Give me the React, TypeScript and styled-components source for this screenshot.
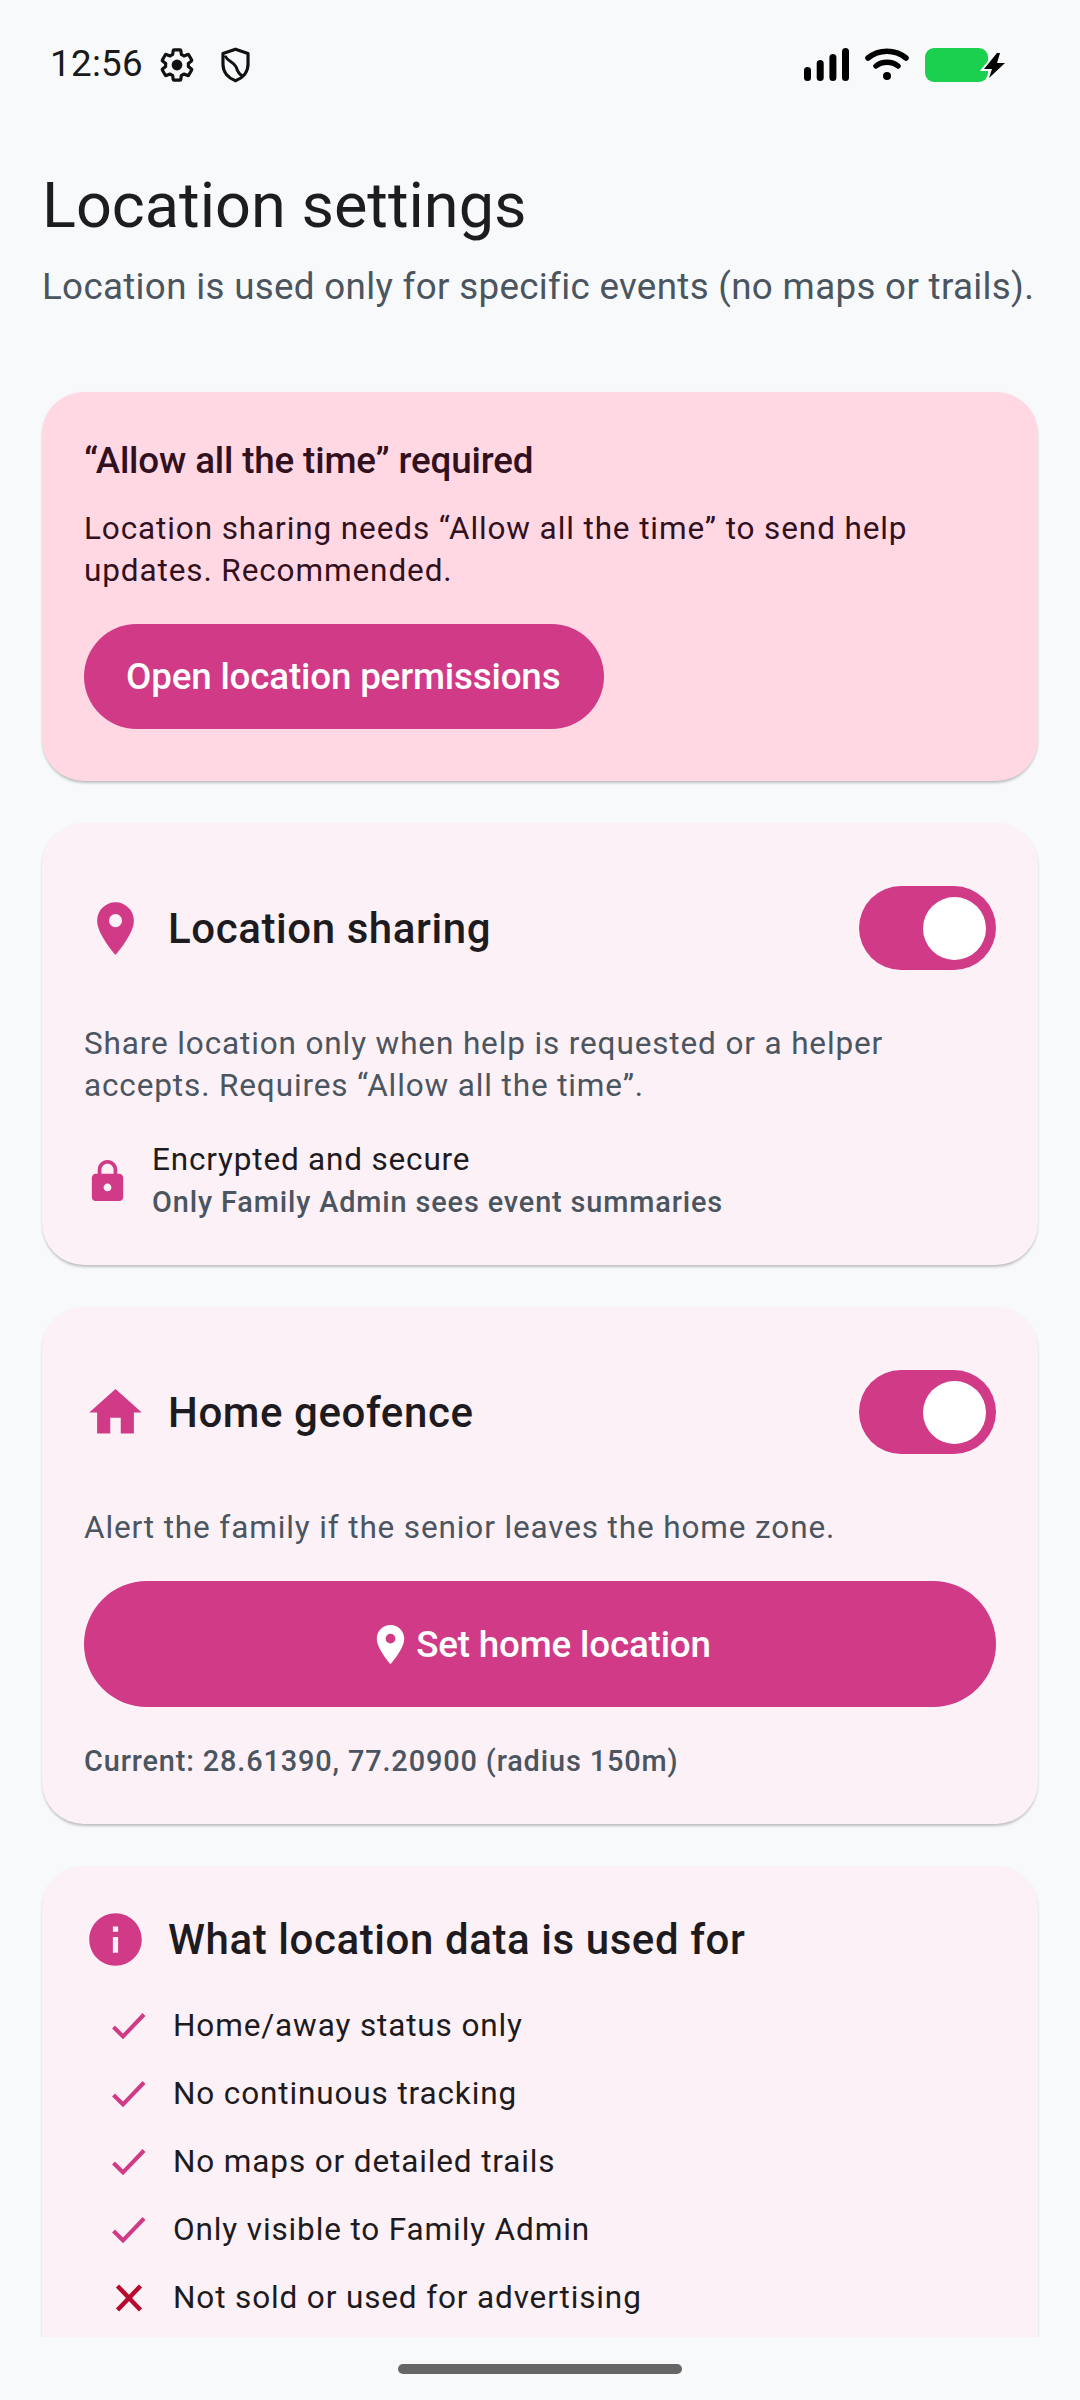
import React from "react";
import styled, { createGlobalStyle } from "styled-components";

const PRIMARY = "#D03A86";

const Global = createGlobalStyle`
  html, body { margin: 0; padding: 0; background: #F8F9FB; }
  body { font-family: Roboto, "Noto Sans", sans-serif; -webkit-font-smoothing: antialiased; }
`;

const Screen = styled.div`
  width: 1080px;
  height: 2400px;
  display: flex;
  flex-direction: column;
  background: #f8f9fb;
  overflow: hidden;
`;

const StatusBar = styled.div`
  height: 126px;
  flex: none;
  display: flex;
  align-items: center;
  justify-content: space-between;
  padding: 3px 74px 0 50px;
  box-sizing: border-box;
`;

const StatusGroup = styled.div`
  display: flex;
  align-items: center;
`;

const Clock = styled.span`
  font-size: 36.75px;
  letter-spacing: 0.3px;
  color: #1a1a1a;
  margin-right: 15px;
  line-height: 42px;
  position: relative;
  top: -1px;
`;

const Scroller = styled.main`
  height: 2211px;
  flex: none;
  overflow: hidden;
  padding: 0 42px;
  box-sizing: border-box;
  display: flex;
  flex-direction: column;
`;

const Title = styled.h1`
  margin: 38px 0 18px;
  font-size: 63px;
  line-height: 84px;
  font-weight: 400;
  color: #1d1d1f;
`;

const Subtitle = styled.p`
  margin: 0 0 84px;
  font-size: 36.75px;
  line-height: 42px;
  letter-spacing: 0.32px;
  color: #4b5560;
  white-space: nowrap;
`;

const Card = styled.section<{ $tone?: "alert" | "plain" }>`
  flex: none;
  background: ${(p) => (p.$tone === "alert" ? "#FFD8E4" : "#FCF1F7")};
  border-radius: 42px;
  padding: 42px;
  margin-bottom: 42px;
  box-shadow: 0 3px 3px -1px rgba(0, 0, 0, 0.2), 0 1px 3px rgba(0, 0, 0, 0.08);
  display: flex;
  flex-direction: column;
  align-items: stretch;
`;

const AlertTitle = styled.h2`
  margin: 0 0 20px;
  font-size: 36.75px;
  line-height: 54px;
  font-weight: 500;
  letter-spacing: -0.15px;
  color: #31111d;
`;

const AlertBody = styled.p`
  margin: 0 0 32px;
  font-size: 31.5px;
  line-height: 42px;
  letter-spacing: 0.89px;
  color: #31111d;
`;

const FillButton = styled.button<{ $wide?: boolean }>`
  border: 0;
  background: ${PRIMARY};
  color: #fff;
  border-radius: 999px;
  font-family: inherit;
  font-size: 36.75px;
  font-weight: 500;
  letter-spacing: -0.17px;
  display: flex;
  align-items: center;
  justify-content: center;
  gap: 2px;
  padding: 0 44px 0 42px;
  height: ${(p) => (p.$wide ? "126px" : "105px")};
  width: ${(p) => (p.$wide ? "100%" : "fit-content")};
  margin-bottom: ${(p) => (p.$wide ? "33px" : "10px")};
`;

const CardHeader = styled.div<{ $tall?: boolean }>`
  display: flex;
  align-items: center;
  justify-content: space-between;
  height: ${(p) => (p.$tall ? "126px" : "63px")};
  margin-bottom: ${(p) => (p.$tall ? "32px" : "34px")};
`;

const HeaderLead = styled.div`
  display: flex;
  align-items: center;
  gap: 21px;
`;

const CardTitle = styled.h2`
  margin: 0;
  font-size: 42px;
  line-height: 63px;
  font-weight: 500;
  letter-spacing: 0.58px;
  color: #1d1b20;
`;

const Toggle = styled.div`
  width: 137px;
  height: 84px;
  border-radius: 42px;
  background: ${PRIMARY};
  display: flex;
  align-items: center;
  justify-content: flex-end;
  padding-right: 10px;
  box-sizing: border-box;
`;

const Thumb = styled.div`
  width: 63px;
  height: 63px;
  border-radius: 50%;
  background: #fff;
`;

const Description = styled.p`
  margin: 0 0 32px;
  font-size: 31.5px;
  line-height: 42px;
  letter-spacing: 0.87px;
  color: #4b5560;
`;

const SecureRow = styled.div`
  display: flex;
  align-items: center;
  gap: 21px;
`;

const SecureText = styled.div`
  display: flex;
  flex-direction: column;
`;

const SecureHead = styled.span`
  font-size: 31.5px;
  line-height: 42px;
  letter-spacing: 0.82px;
  color: #1d1b20;
`;

const Caption = styled.span`
  font-size: 28.875px;
  line-height: 42px;
  font-weight: 500;
  letter-spacing: 0.87px;
  color: #4b5560;
`;

const FactList = styled.ul`
  list-style: none;
  margin: 0;
  padding: 0 0 60px 21px;
  display: flex;
  flex-direction: column;
  gap: 26px;
`;

const Fact = styled.li`
  display: flex;
  align-items: center;
  gap: 20px;
  font-size: 31.5px;
  line-height: 42px;
  letter-spacing: 0.87px;
  color: #1d1b20;
`;

const FactMark = styled.span`
  width: 48px;
  height: 42px;
  flex: none;
  display: flex;
  align-items: center;
  justify-content: center;
`;

const NavArea = styled.div`
  flex: 1;
  display: flex;
  justify-content: center;
  padding-top: 27px;
`;

const HomeBar = styled.div`
  width: 284px;
  height: 10px;
  border-radius: 5px;
  background: #666;
`;

const Glyph = ({ size, d, fill = PRIMARY }: { size: number; d: string; fill?: string }) => (
  <svg width={size} height={size} viewBox="0 0 24 24" fill={fill} style={{ flex: "none" }}>
    <path fillRule="evenodd" d={d} />
  </svg>
);

const PIN = "M12 2C8.13 2 5 5.13 5 9c0 5.25 7 13 7 13s7-7.75 7-13c0-3.87-3.13-7-7-7zm0 9.5a2.5 2.5 0 010-5 2.5 2.5 0 010 5z";
const LOCK = "M18 8h-1V6c0-2.76-2.24-5-5-5S7 3.24 7 6v2H6c-1.1 0-2 .9-2 2v10c0 1.1.9 2 2 2h12c1.1 0 2-.9 2-2V10c0-1.1-.9-2-2-2zm-6 9c-1.1 0-2-.9-2-2s.9-2 2-2 2 .9 2 2-.9 2-2 2zm3.1-9H8.9V6c0-1.71 1.39-3.1 3.1-3.1 1.71 0 3.1 1.39 3.1 3.1v2z";
const HOME = "M10 20v-6h4v6h5v-8h3L12 3 2 12h3v8z";
const INFO = "M12 2C6.48 2 2 6.48 2 12s4.48 10 10 10 10-4.48 10-10S17.52 2 12 2zm1 15h-2v-6h2v6zm0-8h-2V7h2v2z";
const COG = "M19.14 12.94c.04-.3.06-.61.06-.94 0-.32-.02-.64-.07-.94l2.03-1.58c.18-.14.23-.41.12-.61l-1.92-3.32c-.12-.22-.37-.29-.59-.22l-2.39.96c-.5-.38-1.03-.7-1.62-.94l-.36-2.54c-.04-.24-.24-.41-.48-.41h-3.84c-.24 0-.43.17-.47.41l-.36 2.54c-.59.24-1.13.57-1.62.94l-2.39-.96c-.22-.08-.47 0-.59.22L2.74 8.87c-.12.21-.08.47.12.61l2.03 1.58c-.05.3-.09.63-.09.94s.02.64.07.94l-2.03 1.58c-.18.14-.23.41-.12.61l1.92 3.32c.12.22.37.29.59.22l2.39-.96c.5.38 1.03.7 1.62.94l.36 2.54c.05.24.24.41.48.41h3.84c.24 0 .44-.17.47-.41l.36-2.54c.59-.24 1.13-.56 1.62-.94l2.39.96c.22.08.47 0 .59-.22l1.92-3.32c.12-.22.07-.47-.12-.61l-2.01-1.58z";

const Check = () => (
  <svg width="36" height="28" viewBox="0 0 36 28" fill="none">
    <path d="M2.500 15 L12 24.500 L33 2.500" stroke={PRIMARY} strokeWidth="4" />
  </svg>
);

const Cross = () => (
  <svg width="30" height="30" viewBox="0 0 30 30" fill="none">
    <path d="M3.500 3 L26.500 27 M26.500 3 L3.500 27" stroke="#B80A2E" strokeWidth="4.500" />
  </svg>
);

const Gear = () => (
  <svg width="38" height="38" viewBox="0 0 24 24" fill="none" stroke="#111" strokeWidth="2" style={{ marginRight: 25 }}>
    <path d={COG} strokeLinejoin="round" />
    <circle cx="12" cy="12" r="3.400" fill="#111" stroke="none" />
  </svg>
);

const Shield = () => (
  <svg width="29" height="36" viewBox="0 0 22 27" fill="none" stroke="#111" strokeWidth="2.400">
    <path d="M11 1.500 20.500 4.800v8.200c0 6-4 10.500-9.500 12.500C5.500 23.500 1.500 19 1.500 13V4.800z" strokeLinejoin="round" />
    <path d="M3 6.500c2 4.500 7 4.500 8.500 8.500.8 2.800 2 5.500 5 7" strokeWidth="2.200" />
  </svg>
);

const Signal = () => (
  <svg width="45" height="33" viewBox="0 0 45 33" fill="#000" style={{ marginRight: 16 }}>
    <rect x="0" y="19" width="7" height="14" rx="3.500" />
    <rect x="12.700" y="12" width="7" height="21" rx="3.500" />
    <rect x="25.400" y="6" width="7" height="27" rx="3.500" />
    <rect x="38" y="0" width="7" height="33" rx="3.500" />
  </svg>
);

const Wifi = () => (
  <svg width="44" height="33" viewBox="0 0 44 33" fill="none" stroke="#000" strokeWidth="5.500" strokeLinecap="round" style={{ marginRight: 16 }}>
    <path d="M3 10C14 1 30 1 41 10" />
    <path d="M11 18C17 13 27 13 33 18" />
    <circle cx="22" cy="28" r="4" fill="#000" stroke="none" />
  </svg>
);

const Battery = () => (
  <svg width="81" height="34" viewBox="0 0 81 34" style={{ overflow: "visible" }}>
    <rect x="0" y="0" width="63" height="34" rx="9" fill="#1BCF4F" />
    <path d="M72 5 59 21h8l-3 9 16-15h-8l3-10z" fill="#000" stroke="#F8F9FB" strokeWidth="4" paintOrder="stroke" />
  </svg>
);

const facts = [
  "Home/away status only",
  "No continuous tracking",
  "No maps or detailed trails",
  "Only visible to Family Admin",
];

export default function App() {
  return (
    <Screen>
      <Global />
      <StatusBar>
        <StatusGroup>
          <Clock>12:56</Clock>
          <Gear />
          <Shield />
        </StatusGroup>
        <StatusGroup>
          <Signal />
          <Wifi />
          <Battery />
        </StatusGroup>
      </StatusBar>
      <Scroller>
        <Title>Location settings</Title>
        <Subtitle>Location is used only for specific events (no maps or trails).</Subtitle>

        <Card $tone="alert">
          <AlertTitle>“Allow all the time” required</AlertTitle>
          <AlertBody>Location sharing needs “Allow all the time” to send help updates. Recommended.</AlertBody>
          <FillButton>Open location permissions</FillButton>
        </Card>

        <Card>
          <CardHeader $tall>
            <HeaderLead>
              <Glyph size={63} d={PIN} />
              <CardTitle>Location sharing</CardTitle>
            </HeaderLead>
            <Toggle><Thumb /></Toggle>
          </CardHeader>
          <Description>Share location only when help is requested or a helper accepts. Requires “Allow all the time”.</Description>
          <SecureRow>
            <Glyph size={47} d={LOCK} />
            <SecureText>
              <SecureHead>Encrypted and secure</SecureHead>
              <Caption>Only Family Admin sees event summaries</Caption>
            </SecureText>
          </SecureRow>
        </Card>

        <Card>
          <CardHeader $tall>
            <HeaderLead>
              <Glyph size={63} d={HOME} />
              <CardTitle>Home geofence</CardTitle>
            </HeaderLead>
            <Toggle><Thumb /></Toggle>
          </CardHeader>
          <Description>Alert the family if the senior leaves the home zone.</Description>
          <FillButton $wide>
            <Glyph size={47} d={PIN} fill="#fff" />
            Set home location
          </FillButton>
          <Caption>Current: 28.61390, 77.20900 (radius 150m)</Caption>
        </Card>

        <Card>
          <CardHeader>
            <HeaderLead>
              <Glyph size={63} d={INFO} />
              <CardTitle>What location data is used for</CardTitle>
            </HeaderLead>
          </CardHeader>
          <FactList>
            {facts.map((f) => (
              <Fact key={f}>
                <FactMark><Check /></FactMark>
                {f}
              </Fact>
            ))}
            <Fact>
              <FactMark><Cross /></FactMark>
              Not sold or used for advertising
            </Fact>
          </FactList>
        </Card>
      </Scroller>
      <NavArea>
        <HomeBar />
      </NavArea>
    </Screen>
  );
}
